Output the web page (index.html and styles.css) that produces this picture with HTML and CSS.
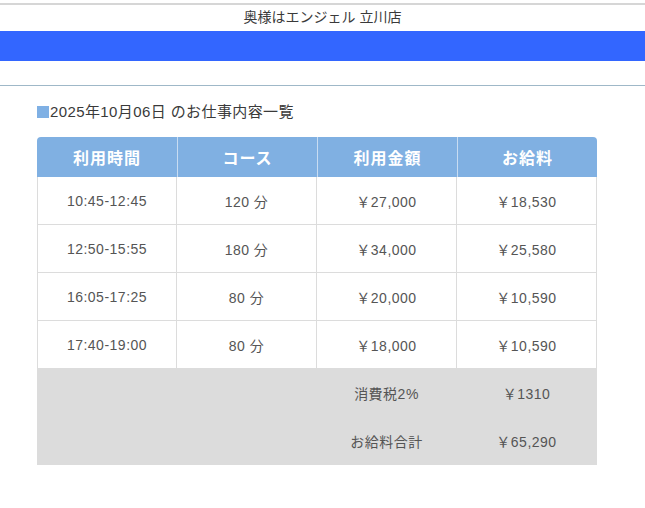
FILE: index.html
```html
<!DOCTYPE html>
<html lang="ja">
<head>
<meta charset="utf-8">
<link rel="stylesheet" href="styles.css">
</head>
<body>
<div class="page">
  <div class="topline"></div>
  <header class="shop">奥様はエンジェル 立川店</header>
  <div class="bluebar"></div>
  <div class="divider"></div>
  <main class="content">
    <h1 class="title"><span class="sq"></span>2025年10月06日 のお仕事内容一覧</h1>
    <table class="jobs">
      <thead>
        <tr><th>利用時間</th><th>コース</th><th>利用金額</th><th>お給料</th></tr>
      </thead>
      <tbody>
        <tr><td>10:45-12:45</td><td>120 分</td><td>￥27,000</td><td>￥18,530</td></tr>
        <tr><td>12:50-15:55</td><td>180 分</td><td>￥34,000</td><td>￥25,580</td></tr>
        <tr><td>16:05-17:25</td><td>80 分</td><td>￥20,000</td><td>￥10,590</td></tr>
        <tr><td>17:40-19:00</td><td>80 分</td><td>￥18,000</td><td>￥10,590</td></tr>
        <tr class="sum"><td></td><td></td><td>消費税2%</td><td>￥1310</td></tr>
        <tr class="sum"><td></td><td></td><td>お給料合計</td><td>￥65,290</td></tr>
      </tbody>
    </table>
  </main>
</div>
</body>
</html>
```
FILE: styles.css
```css
* { box-sizing: border-box; }
html, body { margin: 0; padding: 0; background: #fff; }
body {
  font-family: "Liberation Sans", "Noto Sans CJK JP", sans-serif;
  color: #444;
}
.topline {
  margin-top: 3px;
  height: 2px;
  background: #d6d6d6;
}
.shop {
  height: 26px;
  line-height: 24px;
  text-align: center;
  font-size: 14px;
  color: #3a3a3a;
}
.bluebar {
  height: 30px;
  background: #3366ff;
}
.divider {
  margin-top: 24px;
  height: 1px;
  background: #9fb8c8;
}
.content {
  padding-left: 37px;
}
.title {
  margin: 14px 0 0 0;
  height: 23px;
  font-size: 15px;
  letter-spacing: 0.4px;
  font-weight: normal;
  line-height: 22px;
  display: flex;
  align-items: center;
  color: #3a3a3a;
}
.sq {
  display: inline-block;
  width: 12px;
  height: 12px;
  background: #7fb0e4;
  margin-right: 1px;
}
.jobs {
  margin-top: 14px;
  width: 560px;
  border-collapse: separate;
  border-spacing: 0;
  table-layout: fixed;
}
.jobs th {
  height: 40px;
  background: #80b0e2;
  color: #fff;
  font-size: 16px;
  letter-spacing: 1px;
  font-weight: bold;
  text-align: center;
  padding: 0;
  border-left: 1px solid #c8dcf2;
}
.jobs th:first-child { border-left: none; border-top-left-radius: 4px; }
.jobs th:last-child { border-top-right-radius: 4px; }
.jobs td {
  height: 48px;
  text-align: center;
  font-size: 14px;
  letter-spacing: 0.5px;
  color: #555;
  padding: 0;
  border-right: 1px solid #dcdcdc;
  border-bottom: 1px solid #dcdcdc;
}
.jobs td:first-child { border-left: 1px solid #dcdcdc; }
.jobs tr.sum td {
  background: #dcdcdc;
  border-color: #dcdcdc;
}
```
